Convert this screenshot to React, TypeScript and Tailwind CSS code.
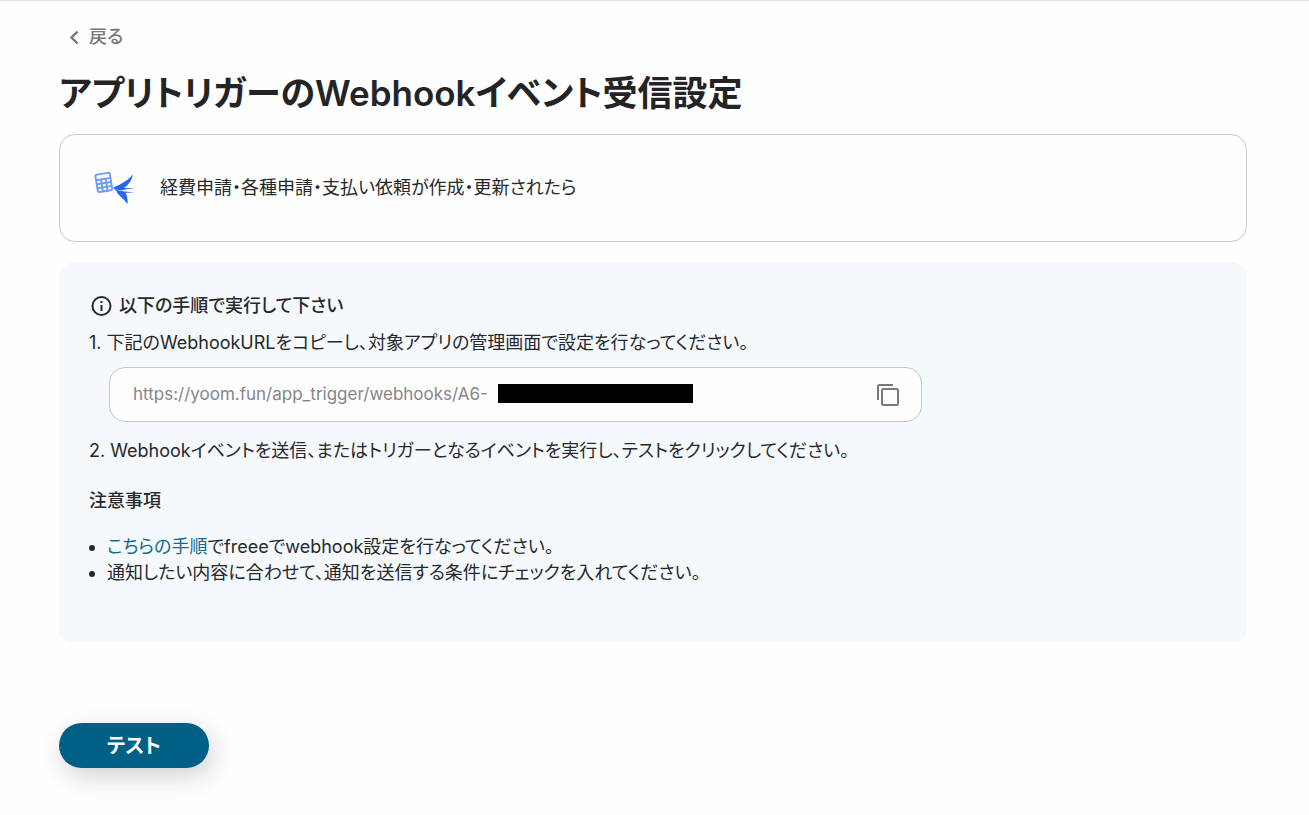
import { useRef } from "react";

const WEBHOOK_URL = "https://yoom.fun/app_trigger/webhooks/A6-";

function AppLogo() {
  return (
    <svg className="h-10 w-11 shrink-0" viewBox="0 0 44 40" fill="none" aria-hidden="true">
      <g transform="rotate(-9 12 15)" stroke="#6b9cf9" strokeWidth="1.9">
        <rect x="4.6" y="5.6" width="14.6" height="17.6" rx="1.8" />
        <path d="M4.600 11h14.600M9.500 11v12.200M14.300 11v12.200M4.600 15.100h14.600M4.600 19.100h14.600" />
      </g>
      <g fill="#2864f0">
        <path d="M21 20C23 18.300 25 18.200 27.500 16.800C32.500 14 37.500 11 41 6.600C40 12 36.500 17.200 32 20L43.500 20.600L34.500 21.300L29 22.500L23.500 21.600Z" />
        <path d="M22 21.200L28.500 23L42.500 24.600L33.500 24.800C35.200 28 36 32 35.500 36.200C32.500 31.200 27 28.500 24.500 23.200Z" />
      </g>
    </svg>
  );
}

export default function App() {
  const urlRef = useRef<HTMLInputElement>(null);

  const copyUrl = () => {
    urlRef.current?.select();
    navigator.clipboard?.writeText(WEBHOOK_URL).catch(() => {});
  };

  return (
    <div
      lang="ja"
      className="min-h-screen border-t border-[#e3e3e5] bg-[#fefefe] pb-11 pl-[59px] pr-[62px] pt-6 font-['Inter','Noto_Sans_CJK_JP',sans-serif] text-lg leading-[26px] text-[#26282c] [font-feature-settings:'palt']"
    >
      {/* Back */}
      <button className="ml-2 flex items-center gap-2 font-medium leading-6 text-[#77777a] cursor-pointer">
        <svg className="h-4 w-[14px]" viewBox="0 0 14 16" fill="none" stroke="currentColor" strokeWidth="2.4">
          <path d="M10.500 2.500L4.500 8.500l6 6" />
        </svg>
        戻る
      </button>

      <h1 className="mt-5 text-[35px] font-semibold leading-[48px] text-[#242427]">アプリトリガーのWebhookイベント受信設定</h1>

      {/* Trigger card */}
      <section className="mt-[17px] flex h-[108px] items-center gap-6 rounded-2xl border border-[#c8c8ca] px-8">
        <AppLogo />
        <p>経費申請・各種申請・支払い依頼が作成・更新されたら</p>
      </section>

      {/* Instructions */}
      <section className="mt-5 rounded-t-2xl rounded-b-xl bg-[#f5f9fc] px-[30px] pb-14 pt-[31px]">
        <h2 className="flex items-center gap-[7px] font-medium">
          <svg className="ml-0.5 h-[21px] w-[21px]" viewBox="0 0 21 21" fill="none" stroke="currentColor" strokeWidth="2">
            <circle cx="10.500" cy="10" r="9" />
            <path d="M10.500 9v6M10.500 5v2" />
          </svg>
          以下の手順で実行して下さい
        </h2>

        <p className="mt-[11px]">1. 下記のWebhookURLをコピーし、対象アプリの管理画面で設定を行なってください。</p>

        <div className="ml-5 mt-[11px] flex h-[55px] max-w-[813px] items-center rounded-2xl border border-[#c6c6cc] bg-[#fefefe] pb-0.5 pl-[23px] pr-[21px]">
          <input
            ref={urlRef}
            type="text"
            readOnly
            aria-label="WebhookURL"
            value={WEBHOOK_URL}
            className="w-[365px] text-[17px] text-[#858587] outline-none"
          />
          <span className="h-[19px] w-[195px] bg-black" />
          <button onClick={copyUrl} aria-label="コピー" className="ml-auto text-[#7b797c] cursor-pointer">
            <svg className="h-6 w-6" viewBox="0 0 24 24" fill="none" stroke="currentColor" strokeWidth="2">
              <path d="M2 18V4.500Q2 3 3.500 3H17" />
              <rect x="6" y="7" width="16" height="16" rx="1.500" />
            </svg>
          </button>
        </div>

        <p className="mt-4">2. Webhookイベントを送信、またはトリガーとなるイベントを実行し、テストをクリックしてください。</p>

        <h3 className="mt-6 font-medium">注意事項</h3>
        <ul className="mt-5 list-disc pl-[18px]">
          <li>
            <a href="#" className="text-[#136c8f]">
              こちらの手順
            </a>
            でfreeeでwebhook設定を行なってください。
          </li>
          <li>通知したい内容に合わせて、通知を送信する条件にチェックを入れてください。</li>
        </ul>
      </section>

      <button className="mt-[81px] h-[45px] w-[150px] rounded-full bg-[#005f85] text-xl font-semibold text-white shadow-[4px_8px_24px_rgba(30,30,60,0.2)] cursor-pointer">
        テスト
      </button>
    </div>
  );
}
